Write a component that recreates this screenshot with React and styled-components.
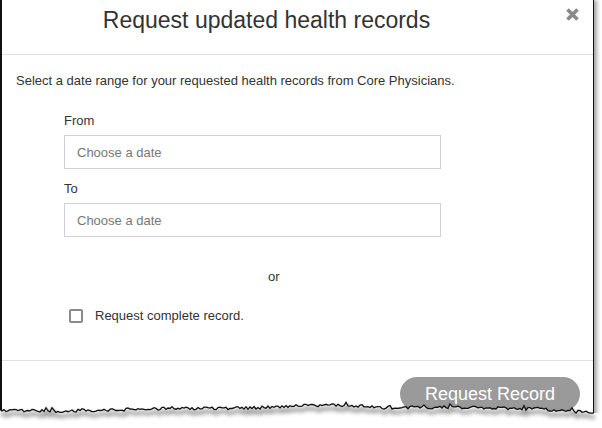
import styled, { createGlobalStyle } from "styled-components";

const GlobalStyle = createGlobalStyle`
  html, body {
    margin: 0;
    background: #fff;
  }
  body {
    font-family: "Liberation Sans", Arial, sans-serif;
  }
`;

const Frame = styled.div`
  position: relative;
  width: 602px;
  height: 428px;
  overflow: hidden;
  background: #fff;
`;

const Dialog = styled.div`
  position: relative;
  box-sizing: border-box;
  width: 594px;
  height: 428px;
  border-left: 2px solid #111;
  border-right: 1px solid #111;
  box-shadow: 3px 0 4px rgba(0, 0, 0, 0.35);
  background: #fff;
  display: flex;
  flex-direction: column;
  color: #333;
`;

const Header = styled.header`
  flex-shrink: 0;
  height: 55px;
  box-sizing: border-box;
  padding: 7px 62px 0 0;
  border-bottom: 1px solid #e1e1e1;
  text-align: center;
`;

const Title = styled.h2`
  margin: 0;
  font-size: 23px;
  font-weight: normal;
  line-height: 27px;
  color: #333;
`;

const CloseButton = styled.button`
  position: absolute;
  top: 7px;
  right: 13px;
  padding: 0;
  border: none;
  background: none;
  width: 15px;
  height: 15px;
  cursor: pointer;
`;

const Body = styled.div`
  flex: 1;
  padding: 17px 14px 0 14px;
`;

const Intro = styled.p`
  margin: 0;
  font-size: 13px;
  line-height: 18px;
`;

const Form = styled.div`
  margin-top: 22px;
  padding-left: 48px;
  display: flex;
  flex-direction: column;
`;

const FieldLabel = styled.label`
  font-size: 13px;
  line-height: 18px;
  margin-bottom: 5px;
`;

const DateInput = styled.input`
  box-sizing: border-box;
  width: 377px;
  height: 34px;
  margin-bottom: ${(p) => (p.$last ? "0" : "11px")};
  padding: 0 12px;
  border: 1px solid #cfd3d8;
  font-family: inherit;
  font-size: 13px;
  color: #333;
  outline: none;

  &::placeholder {
    color: #777;
  }
`;

const Or = styled.div`
  margin-top: 31px;
  padding-left: 204px;
  font-size: 13px;
  line-height: 18px;
`;

const CheckRow = styled.label`
  margin-top: 21px;
  padding-left: 5px;
  display: flex;
  align-items: center;
  gap: 12px;
  font-size: 13px;
  line-height: 18px;
`;

const Checkbox = styled.span`
  box-sizing: border-box;
  width: 14px;
  height: 14px;
  border: 2px solid #8a8797;
  border-radius: 2px;
`;

const Footer = styled.footer`
  flex-shrink: 0;
  height: 68px;
  box-sizing: border-box;
  border-top: 1px solid #e1e1e1;
  padding: 16px 13px 0 0;
  display: flex;
  justify-content: flex-end;
  align-items: flex-start;
`;

const SubmitButton = styled.button`
  width: 180px;
  height: 34px;
  border: none;
  border-radius: 17px;
  background: #9a9a9a;
  color: #fff;
  font-family: inherit;
  font-size: 18px;
`;

const TornEdge = styled.svg`
  position: absolute;
  left: 0;
  top: 395px;
  width: 602px;
  height: 33px;
`;

const baseLine = [
  [0, 15],
  [60, 16],
  [150, 14],
  [250, 13],
  [300, 11],
  [340, 10],
  [380, 13],
  [450, 12],
  [540, 14],
  [594, 18],
];

function baseY(x) {
  for (let i = 0; i < baseLine.length - 1; i++) {
    const [x0, y0] = baseLine[i];
    const [x1, y1] = baseLine[i + 1];
    if (x >= x0 && x <= x1) return y0 + ((x - x0) / (x1 - x0)) * (y1 - y0);
  }
  return 18;
}

function noise(i) {
  const s = Math.sin(i * 12.9898 + 4.1) * 43758.5453;
  return s - Math.floor(s);
}

const edgePts = [];
for (let x = 0; x <= 594; x += 2) {
  const n = noise(x);
  const spike = n > 0.9 ? -2 : 0;
  edgePts.push([x, baseY(x) + (noise(x + 1) - 0.5) * 3 + spike]);
}
const edgePath = edgePts
  .map(([x, y], i) => `${i ? "L" : "M"}${x},${y.toFixed(1)}`)
  .join(" ");
const fillPath = `${edgePath} L602,${edgePts[edgePts.length - 1][1].toFixed(1)} L602,33 L0,33 Z`;

function CloseIcon() {
  return (
    <svg width="15" height="15" viewBox="0 0 15 15">
      <path
        d="M2.5 2.5 L12.5 12.5 M12.5 2.5 L2.5 12.5"
        stroke="#8a8a8a"
        strokeWidth="3.6"
        strokeLinecap="butt"
      />
    </svg>
  );
}

export default function App() {
  return (
    <>
      <GlobalStyle />
      <Frame>
        <Dialog>
          <Header>
            <Title>Request updated health records</Title>
          </Header>
          <CloseButton aria-label="Close">
            <CloseIcon />
          </CloseButton>
          <Body>
            <Intro>
              Select a date range for your requested health records from Core
              Physicians.
            </Intro>
            <Form>
              <FieldLabel>From</FieldLabel>
              <DateInput placeholder="Choose a date" />
              <FieldLabel>To</FieldLabel>
              <DateInput placeholder="Choose a date" $last />
              <Or>or</Or>
              <CheckRow>
                <Checkbox />
                Request complete record.
              </CheckRow>
            </Form>
          </Body>
          <Footer>
            <SubmitButton>Request Record</SubmitButton>
          </Footer>
        </Dialog>
        <TornEdge viewBox="0 0 602 33">
          <defs>
            <filter id="tornBlur" x="-5%" y="-100%" width="110%" height="300%">
              <feGaussianBlur stdDeviation="2" />
            </filter>
          </defs>
          <path d={fillPath} fill="#fff" />
          <path
            d={edgePath}
            transform="translate(1,4)"
            fill="none"
            stroke="rgba(0,0,0,0.45)"
            strokeWidth="3"
            filter="url(#tornBlur)"
          />
          <path d={edgePath} fill="none" stroke="#111" strokeWidth="1.3" />
        </TornEdge>
      </Frame>
    </>
  );
}
